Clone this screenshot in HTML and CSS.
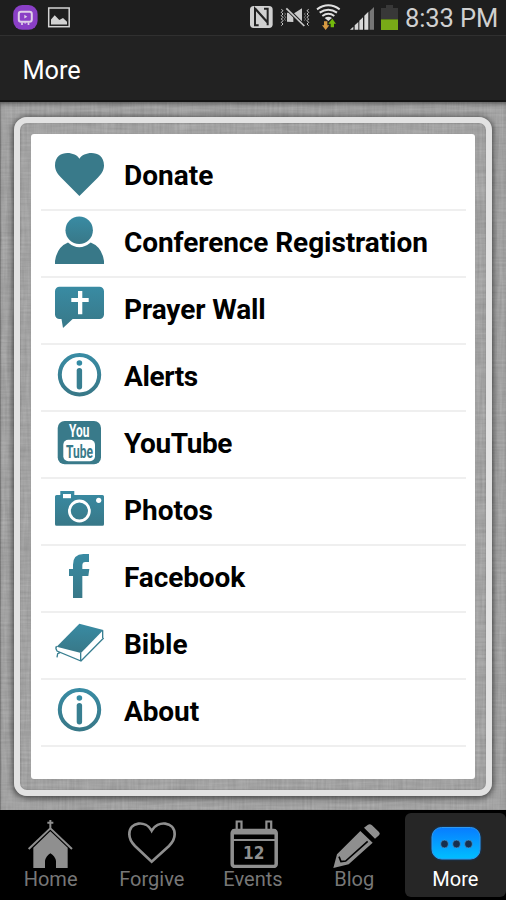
FILE: index.html
```html
<!DOCTYPE html>
<html lang="en">
<head>
<meta charset="utf-8">
<title>More</title>
<link rel="stylesheet" href="styles.css">
</head>
<body>
<svg class="defs" width="0" height="0" aria-hidden="true">
  <defs>
    <linearGradient id="teal" x1="0" y1="0" x2="0" y2="1"><stop offset="0" stop-color="#398ba3"/><stop offset="1" stop-color="#387888"/></linearGradient>
    <symbol id="info" viewBox="0 0 52 65">
      <circle cx="25.5" cy="29.7" r="19.7" fill="none" stroke="url(#teal)" stroke-width="4"/>
      <circle cx="25.4" cy="18" r="2.8" fill="#348ba4"/>
      <rect x="22.7" y="23" width="5.4" height="21.4" rx="2.6" fill="#387f91"/>
    </symbol>
  </defs>
</svg>
<div class="phone">
  <header class="status">
    <svg class="status-left" viewBox="0 0 80 35">
      <rect x="13.2" y="5" width="24.4" height="24.8" rx="9" fill="#8a3fc6"/>
      <rect x="18.8" y="11.8" width="13" height="10" rx="2.2" fill="none" stroke="#dfd0e8" stroke-width="2"/>
      <path d="M24.300 14.800v3.800l3-1.900z" fill="#dfd0e8"/><path d="M22 22.500v2.500M28.500 22.500v2.500M25.200 22.500v1" stroke="#dfd0e8" stroke-width="1.700"/>
      <rect x="48.700" y="8" width="20.500" height="18.700" fill="none" stroke="#d3d3d3" stroke-width="1.500"/>
      <path d="M51 24.500v-5l3.700-4.300 4.600 4.700 3.700-2 4 3.800v2.800z" fill="#d3d3d3"/>
    </svg>
    <svg class="status-right" viewBox="0 0 162 35">
      <g transform="scale(.33333)">
        <rect x="30" y="18" width="68" height="66" rx="11" fill="#d0d0d0"/>
        <path d="M56 76H45V26l37 41M46 26l37 41M72 26h11v50" fill="none" stroke="#222" stroke-width="6"/>
        <path d="M124 28l5 4-5 5 5 5-5 5 5 5-5 5 5 5-5 5 5 5-5 5M206 28l-5 4 5 5-5 5 5 5-5 5 5 5-5 5 5 5-5 5 5 5" fill="none" stroke="#ccc" stroke-width="3"/>
        <path d="M133 38l4 4-4 5 4 5-4 5 4 5M197 38l-4 4 4 5-4 5 4 5-4 5" fill="none" stroke="#aaa" stroke-width="2"/>
        <path d="M141 38h13l32 34V25l-26 16v25l-19-1z" fill="#ccc"/>
        <path d="M139 24l54 55" stroke="#222" stroke-width="11"/><path d="M139 25l54 53" stroke="#ccc" stroke-width="5"/>
        <g fill="none" stroke="#e0e0e0" stroke-width="6"><path d="M231 28q34-24 68 0M239 38q26-18 52 0M247 48q18-13 36 0"/></g>
        <path d="M254 54q11-8 22 0l-11 9z" fill="#e0e0e0"/>
        <path d="M252 64h10v12h6l-11 14-11-14h6z" fill="#d79a42"/>
        <path d="M272 82V71h-7l12-15 11 15h-6v11z" fill="#73ba0c"/>
        <g fill="#d8d8d8"><path d="M330 89l10-9v9zM344 89V76l11-10v23zM358 89V62l11-10v37zM373 89V47l12-12v54z"/></g><path d="M389 89V34l13-13v68z" fill="#777"/>
        <path d="M423 57V24h15v-9h21v9h15v33z" fill="#383838"/><path d="M423 58h51v32h-51z" fill="#78aa17"/>
      </g>
    </svg>
    <span class="clock">8:33 PM</span>
  </header>
  <div class="titlebar"><h1>More</h1></div>
  <main class="stage">
    <svg class="linen" aria-hidden="true">
      <filter id="weave-h" x="0" y="0" width="100%" height="100%"><feTurbulence type="fractalNoise" baseFrequency=".03 .4" numOctaves="2" seed="4"/><feColorMatrix values="0 0 0 0 0  0 0 0 0 0  0 0 0 0 0  .14 0 0 0 -.03"/></filter>
      <filter id="weave-v" x="0" y="0" width="100%" height="100%"><feTurbulence type="fractalNoise" baseFrequency=".4 .03" numOctaves="2" seed="9"/><feColorMatrix values="0 0 0 0 0  0 0 0 0 0  0 0 0 0 0  .14 0 0 0 -.03"/></filter>
      <rect width="506" height="708" filter="url(#weave-h)"/><rect width="506" height="708" filter="url(#weave-v)"/>
    </svg>
    <div class="frame">
      <ul class="menu">
        <li><svg viewBox="54 144 52 65"><path d="M79.400 158.800C75 151 55 149.500 55 165.500C55 170.500 58 174.500 61 177.500L79.400 196L98 177.500C101 174.500 104 170.500 104 165.500C104 149.500 84 151 79.400 158.800z" fill="#397a8a"/></svg><span>Donate</span></li>
        <li><svg viewBox="54 211 52 65"><circle cx="79.200" cy="230.300" r="13.700" fill="url(#teal)"/><path d="M55 264v-3q2-14 13-18.500q11.200 9.500 22.700 0Q102 247 104 261v3z" fill="#387888"/></svg><span class="fit-conf">Conference Registration</span></li>
        <li><svg viewBox="54 278 52 65"><path d="M59.500 286.700h40a4.500 4.500 0 0 1 4.500 4.500v23.300a4.500 4.500 0 0 1-4.500 4.500H72.700L63 328l-1.500-9h-2a4.500 4.500 0 0 1-4.500-4.500v-23.300a4.500 4.500 0 0 1 4.500-4.500z" fill="url(#teal)"/><path d="M78 291h4.300v7h6.400v4h-6.400v12.300H78V302h-6.700v-4H78z" fill="#fff"/></svg><span class="fit">Prayer Wall</span></li>
        <li><svg><use href="#info"/></svg><span class="fit-wide">Alerts</span></li>
        <li><svg viewBox="54 412 52 65"><rect x="57.700" y="421" width="43.300" height="43.200" rx="7" fill="#397a8a"/><rect x="63.300" y="439.700" width="31.700" height="21.600" rx="5" fill="#fff"/>
          <text class="yt" transform="translate(69 437.300) scale(.6 1)" font-size="18.500" fill="#fff" textLength="34" lengthAdjust="spacingAndGlyphs">You</text><text class="yt" transform="translate(66 457.800) scale(.6 1)" font-size="18.500" fill="#397a8a" textLength="45" lengthAdjust="spacingAndGlyphs">Tube</text></svg><span class="fit-wide">YouTube</span></li>
        <li><svg viewBox="54 479 52 65"><path d="M60.300 495v-4h14v4H102.500q1.500 0 1.500 1.500v27.700q0 1.500-1.500 1.500h-46q-1.500 0-1.500-1.500v-27.700q0-1.500 1.500-1.500z" fill="url(#teal)"/><path d="M63 494h8v4.200h-8z" fill="#fff"/><circle cx="79.400" cy="511" r="10" fill="none" stroke="#fff" stroke-width="2.800"/><circle cx="98.700" cy="500.300" r="2.600" fill="#fff"/></svg><span>Photos</span></li>
        <li><svg viewBox="54 546 52 65"><path transform="translate(40 540) scale(.33333)" d="M147 42v24h-11q-9 0-9 10v11h21l-3 21h-18v66H99v-66H87V87h12V74q0-31 31-32z" fill="url(#teal)"/></svg><span class="fit">Facebook</span></li>
        <li><svg viewBox="54 613 52 65"><g transform="translate(40 540) scale(.33333)"><path d="M118 251l72 19-67 69-73-19z" fill="url(#teal)"/><path d="M50 319q-5 5 1 14l72 30 68-69M188 271v23M122 339v22M60 338l-7 3-2 11" fill="none" stroke="#397f91" stroke-width="4"/></g></svg><span>Bible</span></li>
        <li><svg><use href="#info"/></svg><span class="fit">About</span></li>
      </ul>
    </div>
  </main>
  <nav class="tabs">
    <a class="tab"><svg viewBox="0 813 101 55"><g transform="translate(0 740) scale(.33333)"><path d="M100 386v-63l51-49 52 49v63h-35v-23q-3-15-17-23-13 8-16 23v23z" fill="#8f8f8f"/><path d="M86 327l65-62 65 62M151 240v24M142 248h18" fill="none" stroke="#8f8f8f" stroke-width="6"/></g></svg><span>Home</span></a>
    <a class="tab"><svg viewBox="101 813 101 55"><path transform="translate(0 740) scale(.33333)" d="M455 272C438 240 388 244 388 283C388 300 396 309 405 318L455 365L507 318C516 309 524 300 524 283C524 244 472 240 455 272z" fill="none" stroke="#8f8f8f" stroke-width="8"/></svg><span>Forgive</span></a>
    <a class="tab"><svg viewBox="202 813 101 55"><g fill="none" stroke="#8f8f8f"><rect x="232.200" y="830.500" width="44" height="36" rx="2.500" stroke-width="3.500"/><path d="M232 832h44" stroke-width="5"/><path d="M232 840h44" stroke-width="2.200"/><path d="M236.700 830v-8.500h4.800v8.500M266.400 830v-8.500h4.800v8.500" stroke-width="2.200"/></g><text x="243" y="859.300" class="day" font-size="18" textLength="21.500" lengthAdjust="spacingAndGlyphs" fill="#8f8f8f">12</text></svg><span>Events</span></a>
    <a class="tab"><svg viewBox="303 813 101 55"><g transform="translate(320 815) scale(.33333)"><path d="M129 38l12-9q6-4 12 2l21 20q5 5 0 10l-12 10zM118 48l37 35-72 65-46 11 11-41z" fill="#8f8f8f"/><path d="M54 125l6 15 14-2 66-59" fill="none" stroke="#000" stroke-width="5"/></g></svg><span>Blog</span></a>
    <a class="tab active"><svg viewBox="404.500 813 101 55"><defs><linearGradient id="blue" x1="0" y1="0" x2="0" y2="1"><stop offset="0" stop-color="#087cff"/><stop offset="1" stop-color="#00bfff"/></linearGradient></defs><rect class="bubble" x="431.500" y="827.500" width="48" height="31.500" rx="9.500" fill="url(#blue)" stroke="#3199ed"/><g fill="#17304e" stroke="#50a4dc" stroke-width=".6"><circle cx="444" cy="844" r="3.900"/><circle cx="456" cy="844" r="3.900"/><circle cx="468" cy="844" r="3.900"/></g></svg><span>More</span></a>
  </nav>
</div>
</body>
</html>
```
FILE: styles.css
```css
* { box-sizing: border-box; }
body { margin: 0; background: #000; font-family: Roboto, sans-serif; }
.defs { position: absolute; }
.phone { width: 506px; height: 900px; display: flex; flex-direction: column; overflow: hidden; }
.status { height: 35px; flex: none; display: flex; background: #1e1e1e; color: #d0d0d0; }
.status-left { width: 80px; height: 35px; margin-right: 160px; flex: none; }
.status-right { width: 162px; height: 35px; flex: none; }
.clock { margin-left: 3px; font-size: 25.5px; line-height: 36px; white-space: nowrap; letter-spacing: -.1px; }
.titlebar { height: 67px; flex: none; background: #222; border-top: 1px solid #303030; border-bottom: 2px solid #151515; padding-left: 22.500px; }
h1 { margin: 0; font-size: 25.3px; font-weight: 400; line-height: 69px; color: #fff; }
.stage { height: 708px; flex: none; position: relative; background: #b0b0b0; padding: 15px 14px 14px; }
.linen { position: absolute; inset: 0; width: 506px; height: 708px; box-shadow: inset 0 4px 4px -2px #666, inset 1px 0 1px #888; }
.frame { position: relative; height: 679px; border: 6px solid #e2e2e2; border-radius: 13px; padding: 11px; box-shadow: 0 1px 6px 1px rgba(0,0,0,.6), inset 0 0 2px rgba(0,0,0,.25); }
.menu { margin: 0; padding: 10px 9px 0 10px; height: 645px; list-style: none; background: #fff; border-radius: 3px; box-shadow: 0 0 2px #999; }
.menu li { height: 67px; border-bottom: 2px solid #efefef; display: flex; align-items: center; padding-left: 13px; }
.menu svg { width: 52px; height: 65px; flex: none; }
.menu span { margin-left: 18px; font-size: 28px; font-weight: 700; color: #000; white-space: nowrap; line-height: 63px; height: 65px; }
.menu .fit-conf { letter-spacing: -.08px; }
.menu .fit { letter-spacing: -.1px; }
.menu .fit-wide { letter-spacing: -.4px; }
.yt { font-family: Roboto, sans-serif; font-weight: 700; }
.day { font-family: "DejaVu Sans", sans-serif; font-weight: 700; }
.tabs { height: 90px; flex: none; display: grid; grid-template-columns: repeat(5, 101.200px); padding: 3px 0; background: #000; }
.tab { display: flex; flex-direction: column; align-items: center; color: #777; border-radius: 6px; }
.tab svg { width: 101px; height: 55px; flex: none; }
.tab span { font-size: 20px; line-height: 24px; margin-top: -1px; }
.tab.active { background: #262626; color: #fff; }
.bubble { filter: drop-shadow(0 0 1px #074383); }
```
